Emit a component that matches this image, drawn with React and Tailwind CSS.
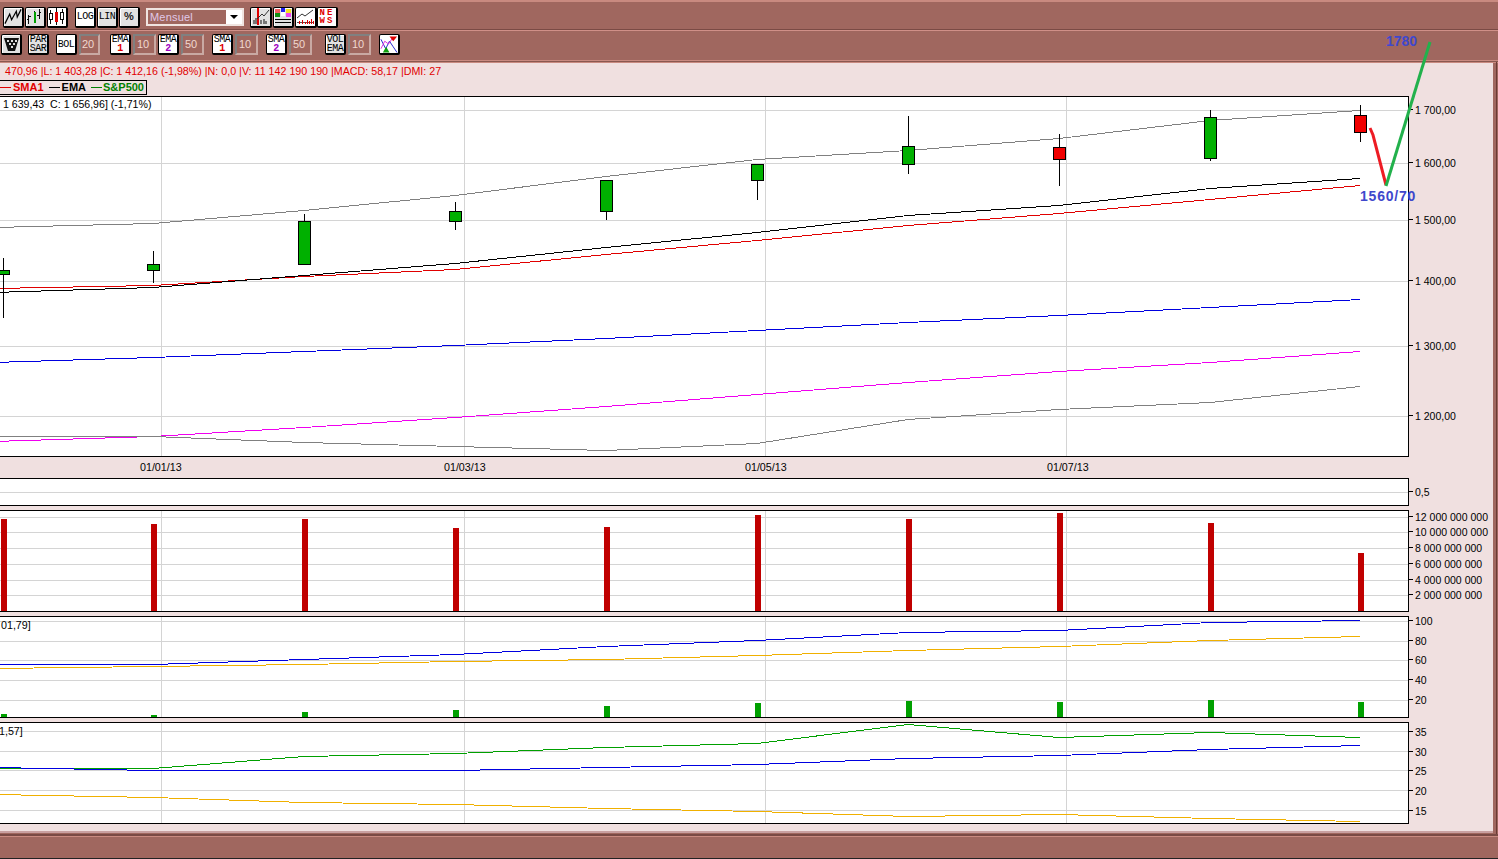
const FONT = { fontFamily: '"Liberation Sans", Arial, sans-serif' };
const X = [3, 153, 304, 455, 606, 757, 908, 1059, 1210, 1360];
const VLINES = [161, 464, 765, 1066];
const pts = (ys, top) => X.map((x, i) => `${i === 0 ? -6 : x},${ys[i] - top + 0.5}`).join(" ");

function Btn({ children, gray, w = "w-[21px]", className = "" }) {
  return (
    <div className={`flex h-[21px] ${w} shrink-0 items-center justify-center overflow-hidden rounded-[2px] border border-r-2 border-b-2 border-black shadow-[inset_1px_1px_0_#ffffff] ${gray ? "bg-[#e2e2e2]" : "bg-white"} ${className}`}>
      {children}
    </div>
  );
}

function Lbl({ a, b, bc }) {
  return (
    <div className="flex flex-col items-center text-[10px] leading-[9px] tracking-[-0.5px] text-black" style={{ fontFamily: '"Liberation Mono", monospace' }}>
      <span>{a}</span>
      {b && <span className={bc ? `font-bold ${bc}` : ""}>{b}</span>}
    </div>
  );
}

function Val({ v, w = "w-[23px]" }) {
  return (
    <div className={`ml-[2px] flex h-[21px] ${w} shrink-0 items-center justify-center border-2 border-t-[#808080] border-l-[#808080] border-r-[#c9a9a3] border-b-[#c9a9a3] bg-[#a0675f] pr-[3px] text-[11px] text-[#f0d8d0]`}>
      {v}
    </div>
  );
}

const Ico = ({ children }) => (
  <svg width="19" height="19" viewBox="0 0 19 19" fill="none" shapeRendering="crispEdges">{children}</svg>
);

function ToolbarOne() {
  return (
    <div className="flex h-[27px] items-center pl-[3px] pt-[3px]">
      <Btn gray><Ico><path d="M1 17 L6 7 L8 13 L13 4 L14 10 L18 2" stroke="#000" strokeWidth="1.3" shapeRendering="auto" /></Ico></Btn>
      <Btn gray className="ml-[1px]"><Ico>
        <path d="M3 8V17M1 13H3M3 10H5M14 2V12M12 8H14M14 5H16M9 4V16" stroke="#000" />
        <rect x="8" y="5" width="3" height="11" fill="#00a000" />
      </Ico></Btn>
      <Btn className="ml-[1px]"><Ico>
        <path d="M3 3V17M15 2V17M9 1V18" stroke="#000" />
        <rect x="1.5" y="6.5" width="3" height="6" fill="#fff" stroke="#000" />
        <rect x="7" y="5" width="4" height="10" fill="#e00000" />
        <rect x="13.5" y="5.5" width="3" height="7" fill="#fff" stroke="#000" />
      </Ico></Btn>
      <Btn className="ml-[7px]"><Lbl a="LOG" /></Btn>
      <Btn gray className="ml-[1px]"><Lbl a="LIN" /></Btn>
      <Btn gray className="ml-[1px]"><span className="text-[11px] font-bold text-[#222]">%</span></Btn>
      <div className="ml-[6px] flex h-[18px] w-[98px] items-center justify-between border-2 border-[#f0e4e0] bg-[#a0675f] pl-[2px]">
        <span className="text-[11px] tracking-[0.2px] text-[#e0c8e8]">Mensuel</span>
        <div className="flex h-full w-[16px] items-center justify-center bg-white">
          <svg width="8" height="5" viewBox="0 0 8 5"><path d="M0 0H8L4 4Z" fill="#000" /></svg>
        </div>
      </div>
      <Btn gray w="w-[22px]" className="ml-[6px]"><Ico>
        <path d="M7 1V18" stroke="#e00000" strokeWidth="1.4" />
        <path d="M6 12L11 7L13 9L18 3" stroke="#333" shapeRendering="auto" />
        <path d="M3 17V13M5 17V11M10 17V13M13 17V12M15 17V14" stroke="#777" strokeWidth="1.4" />
      </Ico></Btn>
      <Btn gray className="ml-[1px]"><Ico>
        <rect x="1" y="2" width="5" height="4" fill="#f06060" /><rect x="7" y="1" width="5" height="4" fill="#2020f0" /><rect x="13" y="2" width="5" height="4" fill="#f0e020" />
        <rect x="1" y="6" width="5" height="4" fill="#109010" /><rect x="7" y="5" width="5" height="4" fill="#fff" /><rect x="13" y="6" width="5" height="4" fill="#f040f0" />
        <path d="M1 13H18M1 16H18" stroke="#000" strokeWidth="1.4" />
      </Ico></Btn>
      <Btn w="w-[22px]" className="ml-[1px]"><Ico>
        <path d="M1 11L6 7L9 9L17 3" stroke="#333" shapeRendering="auto" />
        <path d="M1 15H18" stroke="#555" />
        <path d="M3 17V14M6 17V13M9 17V15M11 17V13M13 17V14M15 17V12M17 17V14" stroke="#e00000" />
      </Ico></Btn>
      <Btn>
        <div className="flex flex-col items-center text-[9px] font-bold leading-[8px] tracking-[2px] text-[#e00000]" style={{ fontFamily: '"Liberation Mono", monospace' }}>
          <span>NE</span><span>WS</span>
        </div>
      </Btn>
    </div>
  );
}

function ToolbarTwo() {
  return (
    <div className="mt-[3px] flex h-[21px] items-center pl-[1px]">
      <Btn gray><svg width="17" height="17" viewBox="0 0 17 17">
        <path d="M1 2H16L12 15H5Z" fill="#111" />
        <g fill="#ddd"><rect x="4" y="4" width="2" height="2" /><rect x="8" y="4" width="2" height="2" /><rect x="12" y="4" width="2" height="2" /><rect x="6" y="7" width="2" height="2" /><rect x="10" y="7" width="2" height="2" /><rect x="8" y="10" width="2" height="2" /></g>
      </svg></Btn>
      <Btn gray className="ml-[6px]"><Lbl a="PAR" b="SAR" /></Btn>
      <Btn className="ml-[7px]"><Lbl a="BOL" /></Btn>
      <Val v="20" w="w-[21px]" />
      <Btn className="ml-[10px]"><Lbl a="EMA" b="1" bc="text-[#e00000]" /></Btn>
      <Val v="10" />
      <Btn className="ml-[2px]"><Lbl a="EMA" b="2" bc="text-[#a000c0]" /></Btn>
      <Val v="50" />
      <Btn className="ml-[8px]"><Lbl a="SMA" b="1" bc="text-[#e00000]" /></Btn>
      <Val v="10" />
      <Btn className="ml-[8px]"><Lbl a="SMA" b="2" bc="text-[#a000c0]" /></Btn>
      <Val v="50" />
      <Btn gray className="ml-[13px]"><Lbl a="VOL" b="EMA" /></Btn>
      <Val v="10" />
      <Btn className="ml-[8px]"><svg width="19" height="19" viewBox="0 0 19 19" fill="none">
        <path d="M1 4L6 14L10 6L14 12L18 18" stroke="#2020d0" />
        <path d="M1 14L5 6L9 9L13 3" stroke="#e030e0" />
        <path d="M10 1H18L14 6Z" fill="#e00000" />
        <path d="M3 18H10L6.500 12Z" fill="#10a010" />
      </svg></Btn>
    </div>
  );
}

function Panel({ h, mt, grid = [], labels = [], vlines = true, children }) {
  return (
    <div className="flex" style={{ marginTop: mt, height: h }}>
      <div className="relative w-[1409px] shrink-0 overflow-hidden border-y border-r border-black bg-white" >
        <svg width="1408" height={h - 2} className="block" shapeRendering="crispEdges">
          {vlines && VLINES.map((x) => <line key={x} x1={x + 0.5} x2={x + 0.5} y1="0" y2={h} stroke="#d4d4d4" />)}
          {grid.map((y) => <line key={y} x1="0" x2="1408" y1={y + 0.5} y2={y + 0.5} stroke="#d4d4d4" />)}
          {children}
        </svg>
      </div>
      <svg width="85" height={h} className="block shrink-0" style={FONT}>
        {labels.map(([y, t]) => (
          <g key={t}>
            <line x1="0" x2="4" y1={y + 1.5} y2={y + 1.5} stroke="#000" shapeRendering="crispEdges" />
            <text x="6" y={y + 5.500} fontSize="10.500" fill="#000">{t}</text>
          </g>
        ))}
      </svg>
    </div>
  );
}

const Line = ({ ys, top, c }) => <polyline points={pts(ys, top)} fill="none" stroke={c} strokeWidth="1" />;

const CANDLES = [
  [258, 318, 270, 274, 0], [251, 283, 264, 270, 0], [214, 265, 221, 264, 0], [202, 230, 211, 221, 0], [180, 220, 180, 211, 0],
  [164, 200, 164, 180, 0], [116, 174, 146, 164, 0], [134, 186, 147, 159, 1], [110, 161, 117, 158, 0], [105, 142, 115, 132, 1],
];
const MAIN = 97;

function MainChart() {
  return (
    <Panel h={361} mt={0} grid={[110, 163, 220, 281, 346, 416].map((y) => y - MAIN)}
      labels={[[12, "1 700,00"], [65, "1 600,00"], [122, "1 500,00"], [183, "1 400,00"], [248, "1 300,00"], [318, "1 200,00"]]}>
      <Line c="#808080" top={MAIN} ys={[227, 223, 210, 195, 176, 159, 150, 138, 120, 110]} />
      <Line c="#0000e0" top={MAIN} ys={[362, 357, 351, 345, 338, 330, 322, 315, 307, 299]} />
      <Line c="#f000f0" top={MAIN} ys={[441, 436, 427, 417, 406, 394, 382, 371, 362, 351]} />
      <Line c="#808080" top={MAIN} ys={[436, 436, 442, 446, 450, 443, 419, 409, 402, 386]} />
      <Line c="#e00000" top={MAIN} ys={[288, 285, 276, 269, 254, 240, 225, 213, 199, 185]} />
      <Line c="#000000" top={MAIN} ys={[292, 287, 275, 263, 247, 232, 215, 205, 188, 178]} />
      {CANDLES.map(([a, b, c, d, red], i) => (
        <g key={i}>
          <line x1={X[i] + 0.5} x2={X[i] + 0.5} y1={a - MAIN} y2={b - MAIN} stroke="#000" />
          <rect x={X[i] - 6 + 0.5} y={c - MAIN + 0.5} width="12" height={d - c} fill={red ? "#f00000" : "#00b000"} stroke="#000" />
        </g>
      ))}
      <text x="3" y="11" fontSize="10.600" fill="#000" style={{ ...FONT, whiteSpace: "pre" }} shapeRendering="auto">1 639,43  C: 1 656,96] (-1,71%)</text>
    </Panel>
  );
}

function DateRow() {
  return (
    <div className="flex h-[21px] w-[1409px] items-center whitespace-nowrap text-[10.700px] text-black">
      <span className="ml-[140px] w-[42px]">01/01/13</span>
      <span className="ml-[262px] w-[42px]">01/03/13</span>
      <span className="ml-[259px] w-[42px]">01/05/13</span>
      <span className="ml-[260px] w-[42px]">01/07/13</span>
    </div>
  );
}

function Bars({ tops, bottom, top, c, w = 6 }) {
  return tops.map((t, i) => <rect key={i} x={X[i] - 2} y={t - top} width={w} height={bottom - t} fill={c} />);
}

export default function App() {
  return (
    <div className="relative h-[859px] w-[1498px] overflow-hidden bg-[#a0675f] text-black" style={FONT}>
      <div className="flex h-full flex-col">
        <div className="border-t-2 border-[#c98a80]">
          <ToolbarOne />
        </div>
        <div className="h-[2px] border-b border-[#d09088] bg-[#7a4a44]" />
        <ToolbarTwo />
        <div className="mt-[5px] h-[3px] border-y border-[#c98a80] bg-[#8a5850]" />

        <div className="mr-[5px] h-[770px] shrink-0 border-b-2 border-[#c9a0a0] bg-[#f0e0e0]">
          <div className="mt-[2px] h-[12px] whitespace-nowrap pl-[5px] text-[10.700px] leading-[12px] text-[#e00000]">
            470,96 |L: 1 403,28 |C: 1 412,16 (-1,98%) |N: 0,0 |V: 11 142 190 190 |MACD: 58,17 |DMI: 27
          </div>
          <div className="mt-[3px] flex h-[15px] w-[147px] items-center whitespace-nowrap border border-l-0 border-black bg-[#f0e0e0] text-[11px] font-bold leading-none">
            <span className="h-px w-[11px] bg-[#e00000]" />
            <span className="ml-[2px] text-[#e00000]">SMA1</span>
            <span className="ml-[5px] h-px w-[11px] bg-black" />
            <span className="ml-[2px] text-black">EMA</span>
            <span className="ml-[5px] h-px w-[11px] bg-[#008000]" />
            <span className="ml-px text-[#008000]">S&amp;P500</span>
          </div>
          <div className="mt-[1px]">
            <MainChart />
            <DateRow />
            <Panel h={28} mt={0} vlines={false} grid={[13]} labels={[[12, "0,5"]]} />
            <Panel h={102} mt={4} grid={[6, 21, 37, 53, 69, 84]} labels={[[5, "12 000 000 000"], [20, "10 000 000 000"], [36, "8 000 000 000"], [52, "6 000 000 000"], [68, "4 000 000 000"], [83, "2 000 000 000"]]}>
              <Bars c="#c00000" top={511} bottom={612} tops={[519, 524, 519, 528, 527, 515, 519, 513, 523, 553]} />
            </Panel>
            <Panel h={102} mt={4} grid={[4, 24, 43, 63, 83]} labels={[[3, "100"], [23, "80"], [42, "60"], [62, "40"], [82, "20"]]}>
              <Line c="#f0b000" top={617} ys={[668, 666, 664, 661, 659, 655, 650, 646, 640, 636]} />
              <Line c="#0000e0" top={617} ys={[664, 664, 659, 654, 646, 640, 632, 630, 622, 620]} />
              <Bars c="#00a000" top={617} bottom={717} tops={[714, 715, 712, 710, 706, 703, 701, 702, 700, 702]} />
              <text x="1" y="12" fontSize="10.700" fill="#000" style={FONT} shapeRendering="auto">01,79]</text>
            </Panel>
            <Panel h={102} mt={4} grid={[8, 28, 47, 67, 87]} labels={[[8, "35"], [28, "30"], [47, "25"], [67, "20"], [87, "15"]]}>
              <Line c="#f0b000" top={723} ys={[794, 797, 802, 804, 808, 811, 816, 814, 818, 821]} />
              <Line c="#00a000" top={723} ys={[768, 768, 756, 753, 747, 743, 724, 737, 732, 737]} />
              <Line c="#0000e0" top={723} ys={[767, 770, 770, 770, 767, 764, 758, 755, 749, 745]} />
              <text x="-1" y="12" fontSize="10.700" fill="#000" style={FONT} shapeRendering="auto">1,57]</text>
            </Panel>
          </div>
        </div>
        <div className="mt-[1px] h-[2px] bg-[#7a4a44]" />
        <div className="h-px bg-[#c98a80]" />
      </div>
      <div className="absolute bottom-0 left-0 right-0 h-px bg-[#222]" />
      <div className="absolute right-[1px] top-[62px] h-[772px] w-px bg-[#6a3a34]" />

      {/* hand-drawn annotation over the chart */}
      <svg className="pointer-events-none absolute left-0 top-0" width="1498" height="859" fill="none">
        <path d="M1370 128L1373 135L1386 185" stroke="#ed1c24" strokeWidth="3" />
        <path d="M1386 186L1430 42" stroke="#22b14c" strokeWidth="3" />
      </svg>
      <span className="absolute left-[1386px] top-[34px] text-[14px] font-bold leading-none text-[#3f48cc]">1780</span>
      <span className="absolute left-[1360px] top-[189px] text-[14px] font-bold leading-none tracking-[0.8px] text-[#3f48cc]">1560/70</span>
    </div>
  );
}
